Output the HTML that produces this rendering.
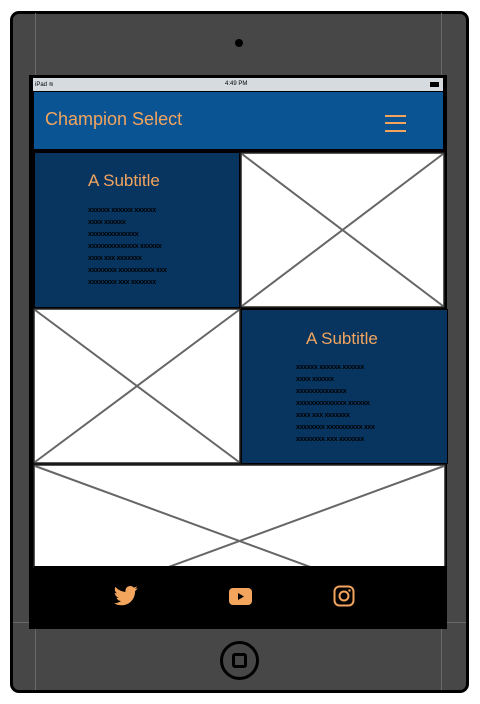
<!DOCTYPE html>
<html><head><meta charset="utf-8"><style>
*{margin:0;padding:0;box-sizing:border-box}
body{width:480px;height:704px;background:#fff;position:relative;overflow:hidden;font-family:"Liberation Sans",sans-serif}
.a{position:absolute}
.dev{left:10px;top:11px;width:459px;height:682px;background:#474747;border:3px solid #000;border-radius:9px}
.vl{width:1px;background:#6a6a6a}
.dark{background:#07355f;border:1.5px solid #000}
.sub{color:#f3a55e;font-size:17px;white-space:nowrap}
.txt{font-size:7px;font-weight:bold;color:#000;line-height:12px;white-space:nowrap;letter-spacing:-0.3px}
</style></head><body>
<div class="a dev"></div>
<div class="a vl" style="left:35px;top:13px;height:677px"></div>
<div class="a vl" style="left:441px;top:13px;height:677px"></div>
<div class="a" style="left:13px;top:622px;width:453px;height:1px;background:#6a6a6a"></div>
<div class="a" style="left:235px;top:39px;width:8px;height:8px;border-radius:50%;background:#000"></div>
<div class="a" style="left:29px;top:75px;width:418px;height:554px;background:#000"></div>
<div class="a" style="left:33px;top:78px;width:410px;height:13px;background:#d5dbdf;font-size:6px;color:#000">
<span class="a" style="left:2px;top:3px">iPad ≋</span><span class="a" style="left:192px;top:3px">4:49 PM</span><span class="a" style="right:4px;top:4px;width:9px;height:5px;border:1px solid #000;background:#000"></span></div>
<div class="a" style="left:34px;top:92px;width:409px;height:57px;background:#0a5494"></div>
<div class="a" style="left:45px;top:109px;color:#f3a55e;font-size:18px">Champion Select</div>
<div class="a" style="left:385px;top:115px;width:21px;height:2px;background:#f3a55e"></div>
<div class="a" style="left:385px;top:122px;width:21px;height:2px;background:#f3a55e"></div>
<div class="a" style="left:385px;top:130px;width:21px;height:2px;background:#f3a55e"></div>

<div class="a dark" style="left:34px;top:152px;width:206px;height:156px"></div>
<div class="a sub" style="left:88px;top:171px">A Subtitle</div>
<div class="a txt" style="left:88px;top:205px">xxxxxx xxxxxx xxxxxx<br>xxxx xxxxxx<br>xxxxxxxxxxxxxx<br>xxxxxxxxxxxxxx xxxxxx<br>xxxx xxx xxxxxxx<br>xxxxxxxx xxxxxxxxxx xxx<br>xxxxxxxx xxx xxxxxxx</div>

<svg class="a" style="left:240px;top:152px" width="205" height="156"><rect x="1" y="1" width="203" height="154" fill="#fff" stroke="#222" stroke-width="1.5"/><path d="M2 2L203 154M203 2L2 154" stroke="#666" stroke-width="2"/></svg>
<svg class="a" style="left:33px;top:308px" width="208" height="156"><rect x="1" y="1" width="206" height="154" fill="#fff" stroke="#222" stroke-width="1.5"/><path d="M2 2L206 154M206 2L2 154" stroke="#666" stroke-width="2"/></svg>

<div class="a dark" style="left:241px;top:309px;width:207px;height:155px"></div>
<div class="a sub" style="left:306px;top:329px">A Subtitle</div>
<div class="a txt" style="left:296px;top:362px">xxxxxx xxxxxx xxxxxx<br>xxxx xxxxxx<br>xxxxxxxxxxxxxx<br>xxxxxxxxxxxxxx xxxxxx<br>xxxx xxx xxxxxxx<br>xxxxxxxx xxxxxxxxxx xxx<br>xxxxxxxx xxx xxxxxxx</div>

<svg class="a" style="left:33px;top:464px" width="413" height="104"><rect x="1" y="1" width="411" height="150" fill="#fff" stroke="#222" stroke-width="1.5"/><path d="M2 2L411 152M411 2L2 152" stroke="#666" stroke-width="2"/></svg>
<div class="a" style="left:34px;top:566px;width:412px;height:62px;background:#000"></div>

<svg class="a" style="left:114px;top:585px" width="24" height="22" viewBox="0 0 24 20"><path fill="#f3a55e" d="M23.6 2.3c-.9.4-1.8.6-2.8.8 1-.6 1.8-1.5 2.1-2.700-.9.6-2 1-3.1 1.2C18.9.6 17.6 0 16.2 0c-2.7 0-4.8 2.2-4.8 4.8 0 .4 0 .8.1 1.1C7.5 5.7 3.9 3.8 1.5.9c-.4.7-.7 1.6-.7 2.4 0 1.7.9 3.2 2.2 4-.8 0-1.5-.2-2.2-.6v.1c0 2.3 1.7 4.3 3.900 4.700-.4.1-.8.2-1.3.2-.3 0-.6 0-.9-.1.6 1.9 2.4 3.3 4.5 3.4-1.7 1.3-3.7 2.1-6 2.1H0c2.1 1.4 4.7 2.2 7.4 2.2 8.9 0 13.7-7.4 13.7-13.7v-.6c1-.7 1.8-1.5 2.5-2.5z"/></svg>
<svg class="a" style="left:229px;top:588px" width="23" height="17"><rect x="0" y="0" width="23" height="17" rx="4" fill="#f3a55e"/><path d="M9 5L15 8.5L9 12Z" fill="#000"/></svg>
<svg class="a" style="left:333px;top:585px" width="22" height="22"><rect x="1.5" y="1.5" width="19" height="19" rx="5" fill="none" stroke="#f3a55e" stroke-width="2"/><circle cx="11" cy="11" r="4.5" fill="none" stroke="#f3a55e" stroke-width="2"/><circle cx="16.5" cy="5.5" r="1.2" fill="#f3a55e"/></svg>

<div class="a" style="left:220px;top:641px;width:39px;height:39px;border-radius:50%;border:3px solid #000"></div>
<div class="a" style="left:232px;top:653px;width:15px;height:15px;border-radius:3px;border:3px solid #000"></div>
</body></html>
